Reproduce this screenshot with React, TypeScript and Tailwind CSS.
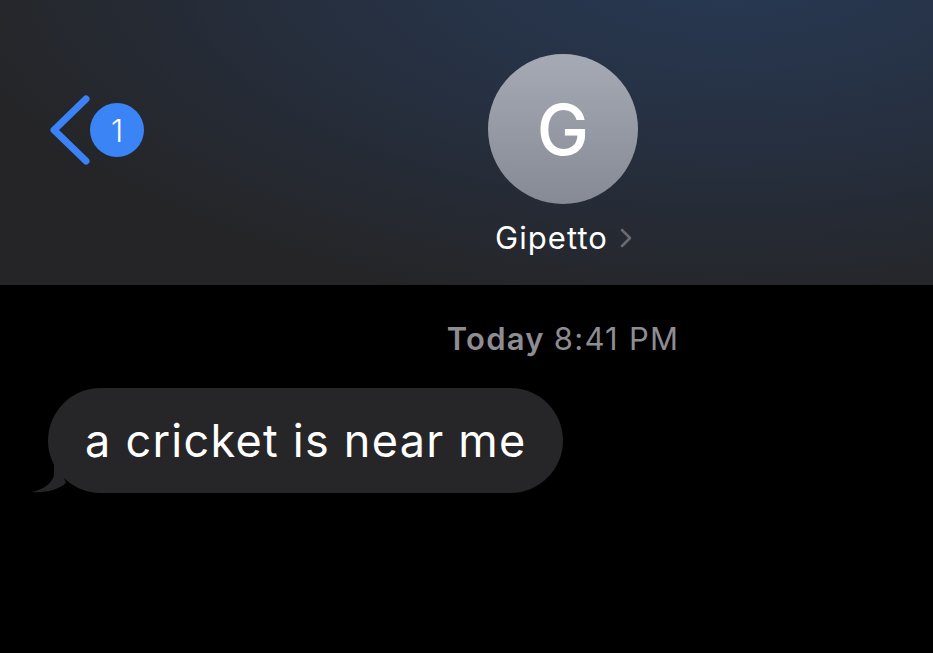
// Écran de conversation Messages (mode sombre)

const FONT = "font-['Inter','Noto_Sans',sans-serif]";

function BackButton({ count }: { count: number }) {
  return (
    <div className="flex items-center">
      <svg width="44" height="72" viewBox="0 0 44 72" className="-mr-[2px]">
        <path
          d="M38 5 L6 36 L38 67"
          fill="none"
          stroke="#3b82f6"
          strokeWidth="7"
          strokeLinecap="round"
          strokeLinejoin="round"
        />
      </svg>
      <div className="flex h-[54px] w-[54px] items-center justify-center rounded-full bg-[#3a84f6] text-[31px] font-light leading-none text-white">
        {count}
      </div>
    </div>
  );
}

function Avatar({ initial }: { initial: string }) {
  return (
    <div className="flex h-[150px] w-[150px] items-center justify-center rounded-full bg-gradient-to-b from-[#a6aab4] to-[#868a95] pt-[2px] text-[70px] font-medium leading-none text-white">
      {initial}
    </div>
  );
}

function Header() {
  return (
    <div className="flex h-[285px] bg-[#252527] bg-[radial-gradient(ellipse_at_78%_-15%,#283a55_0%,#263041_38%,#252527_78%)]">
      <div className="w-[488px] pl-[48px] pt-[94px]">
        <BackButton count={1} />
      </div>
      <div className="flex w-[150px] flex-col items-center pt-[54px]">
        <Avatar initial="G" />
        <div className="mt-[18px] flex items-center gap-[11px] pl-[2px]">
          <span className="text-[31px] leading-none tracking-[0.035em] text-white">Gipetto</span>
          <svg width="14" height="22" viewBox="0 0 14 22">
            <path d="M3 3 L11 11 L3 19" fill="none" stroke="#6b6b70" strokeWidth="2.5" strokeLinecap="round" strokeLinejoin="round" />
          </svg>
        </div>
      </div>
    </div>
  );
}

function Bubble({ text }: { text: string }) {
  return (
    <div className="relative ml-[48px] w-fit">
      <svg width="40" height="40" viewBox="0 0 40 40" className="absolute -left-[16px] bottom-0">
        <path d="M22 0 L22 20 C22 30 10 37 0 39 C14 40 26 37 34 30 Z" fill="#262628" />
      </svg>
      <div className="relative flex h-[105px] items-center rounded-[53px] bg-[#262628] px-[37px] text-[45px] leading-none tracking-[0.028em] text-white">
        {text}
      </div>
    </div>
  );
}

export default function App() {
  return (
    <div className={`h-[653px] w-[933px] overflow-hidden bg-black ${FONT}`}>
      <Header />
      <div className="flex justify-center pl-[193px] pt-[38px] text-[31px] leading-none tracking-[0.04em] text-[#8d8d92]">
        <span className="font-semibold">Today</span>
        <span className="ml-[9px]">8:41 PM</span>
      </div>
      <div className="pt-[34px]">
        <Bubble text="a cricket is near me" />
      </div>
    </div>
  );
}
